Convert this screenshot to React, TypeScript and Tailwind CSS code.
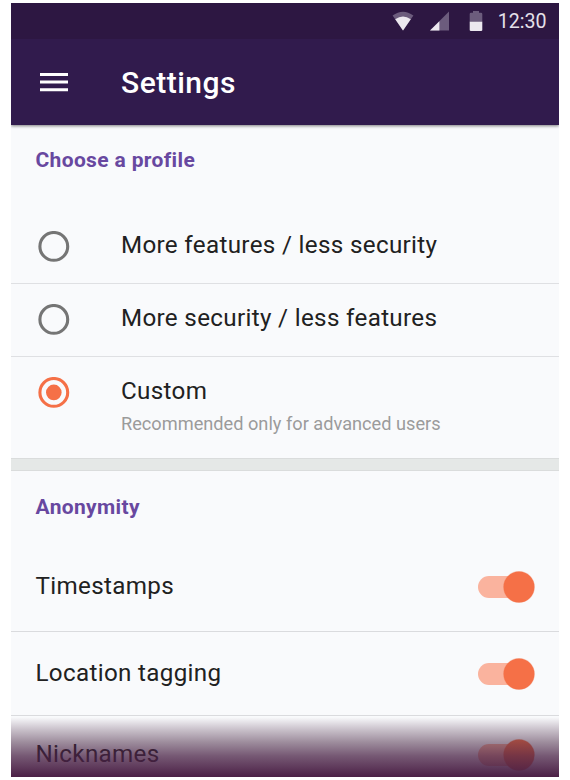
import React from "react";

function Radio({ checked = false }: { checked?: boolean }) {
  return (
    <svg className="block shrink-0" width="32" height="32" viewBox="0 0 32 32" fill="none">
      <circle cx="15.8" cy="15.4" r="13.9" stroke={checked ? "#f57047" : "#757575"} strokeWidth="3.1" />
      {checked && <circle cx="15.8" cy="15.4" r="7.8" fill="#f57047" />}
    </svg>
  );
}

function Toggle() {
  return (
    <svg className="block shrink-0" width="58" height="32" viewBox="0 0 58 32">
      <rect x="1" y="5" width="46" height="22" rx="11" fill="#fab39e" />
      <circle cx="42" cy="16" r="15.9" fill="#f27d59" opacity="0.35" />
      <circle cx="42" cy="16" r="15.4" fill="#f57047" />
    </svg>
  );
}

function Option({ label, note, checked }: { label: string; note?: string; checked?: boolean }) {
  return (
    <div
      className={`flex items-start gap-[51px] pl-[27px] pt-[20px] ${
        note ? "h-[101px]" : "h-[73px] border-b border-[#dfe0e3]"
      }`}
    >
      <Radio checked={checked} />
      <div className="flex flex-col">
        <span className="h-8 text-[24.2px] leading-[29px] tracking-[0.33px] whitespace-nowrap">{label}</span>
        {note && <span className="text-[18.2px] leading-[29px] text-[#9b9b9b] whitespace-nowrap">{note}</span>}
      </div>
    </div>
  );
}

function Setting({ label }: { label: string }) {
  return (
    <>
      <span className="pb-[2px] text-[24.2px] leading-[30px] tracking-[0.33px]">{label}</span>
      <Toggle />
    </>
  );
}

export default function App() {
  return (
    <div className="h-[780px] w-[570px] overflow-hidden bg-white pl-[11px] pt-[3px] font-[Roboto,sans-serif] text-[#212121]">
      <main className="relative h-[774px] w-[548px] overflow-hidden bg-[#f9fafc]">
        <header className="relative h-[122px] bg-[#311b4d] text-white shadow-[0_1px_3px_rgba(0,0,0,0.5)]">
          <div className="flex h-9 items-center justify-end bg-[#2d1742] pr-[12.5px] text-[#e5e0e9]">
            <svg className="block" width="22" height="20" viewBox="0 0 22 20">
              <path d="M.6 4.6Q11-3 21.4 4.6L11 19.6Z" fill="#6c5c7d" />
              <path d="M3.2 8.2Q11 2.6 18.8 8.2L11 19.6Z" fill="#ece8ef" />
            </svg>
            <svg className="ml-[16px] block" width="20" height="20" viewBox="0 0 20 20">
              <path d="M0 19.6L19 .6V19.6Z" fill="#6c5c7d" />
              <path d="M0 19.6L9.4 10.2V19.6Z" fill="#ece8ef" />
            </svg>
            <svg className="ml-[19px] block" width="14" height="21" viewBox="0 0 14 21">
              <path d="M4 0H10V1.8H12Q13.3 1.8 13.3 3V11H.7V3Q.7 1.8 2 1.8H4Z" fill="#6c5c7d" />
              <path d="M.7 10.8H13.3V19Q13.3 20 12 20H2Q.7 20 .7 19Z" fill="#ece8ef" />
            </svg>
            <span className="ml-[14.5px] mt-px text-[19.6px] leading-5">12:30</span>
          </div>
          <div className="flex h-[86px] items-center gap-[53px] pl-[29px]">
            <svg className="block" width="28" height="20" viewBox="0 0 28 20" fill="white">
              <path d="M0 1h28v3H0zM0 8.6h28v3H0zM0 16.2h28v3H0z" />
            </svg>
            <h1 className="pt-[2px] text-[30px] font-medium leading-9 tracking-[0.5px]">Settings</h1>
          </div>
        </header>

        <section>
          <h2 className="h-[86px] pl-[24.5px] pt-[22px] text-[21px] font-bold leading-[26px] tracking-[0.35px] text-[#6848a0]">Choose a profile</h2>
          <Option label="More features / less security" />
          <Option label="More security / less features" />
          <Option label="Custom" note="Recommended only for advanced users" checked />
        </section>

        <div className="h-[13px] border-y border-[#dadcdc] bg-[#e5e8e7]" />

        <section>
          <h2 className="h-[73px] pl-[24.5px] pt-[23px] text-[21px] font-bold leading-[26px] tracking-[0.35px] text-[#6848a0]">Anonymity</h2>
          <div className="flex h-[88px] items-center justify-between border-b border-[#dadbde] pb-[2px] pl-[24.5px] pr-[24px]">
            <Setting label="Timestamps" />
          </div>
          <div className="flex h-[84px] items-center justify-between border-b border-[#dadbde] pl-[24.5px] pr-[24px]">
            <Setting label="Location tagging" />
          </div>
          <div className="flex h-[78px] items-center justify-between pl-[24.5px] pr-[24px]">
            <Setting label="Nicknames" />
          </div>
        </section>
        <div className="absolute inset-x-0 bottom-0 h-[60px] bg-[linear-gradient(to_bottom,rgba(66,32,62,0),rgba(66,32,62,0.25)_20%,rgba(66,32,62,0.5)_42%,rgba(72,32,68,0.74)_65%,rgb(75,32,70))]" />
      </main>
    </div>
  );
}
